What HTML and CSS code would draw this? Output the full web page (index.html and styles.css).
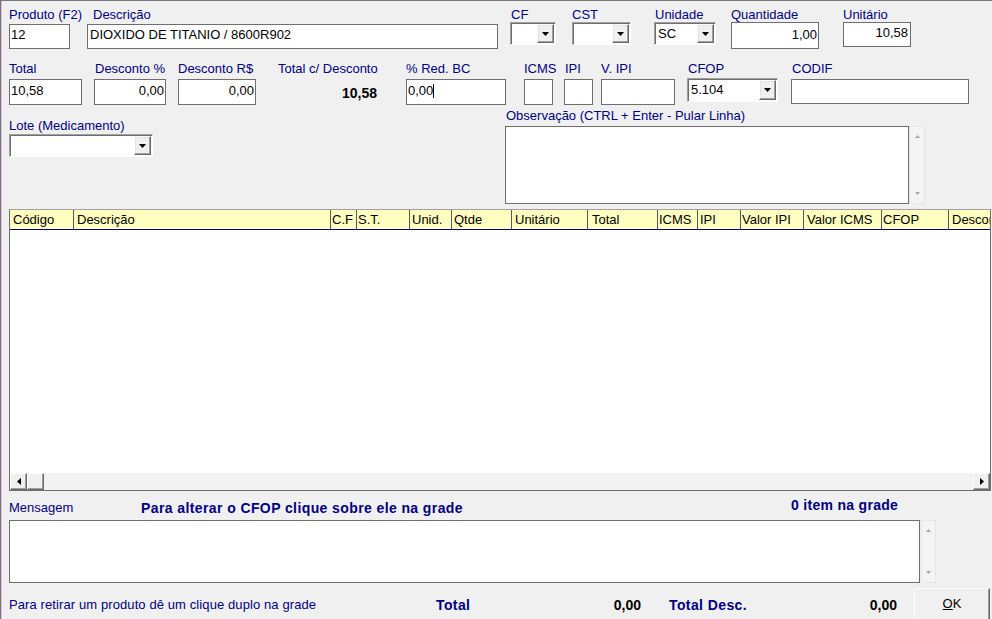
FILE: index.html
```html
<!DOCTYPE html>
<html lang="pt-BR">
<head>
<meta charset="utf-8">
<title>Itens da Nota</title>
<link rel="stylesheet" href="styles.css">
</head>
<body>
<div class="window">
  <div class="row row1">
    <div class="field f-prod">
      <div class="lbl">Produto (F2)</div>
      <div class="edit r1 mt2">12</div>
    </div>
    <div class="field f-desc">
      <div class="lbl">Descrição</div>
      <div class="edit r1 mt2 pl2">DIOXIDO DE TITANIO / 8600R902</div>
    </div>
    <div class="field f-cf">
      <div class="lbl pl1">CF</div>
      <div class="combo h23"><span class="combo-text"></span><span class="combo-btn"><svg width="7" height="4" viewBox="0 0 7 4"><path d="M0 0h7L3.5 4z" fill="#000"/></svg></span></div>
    </div>
    <div class="field f-cst">
      <div class="lbl">CST</div>
      <div class="combo h23"><span class="combo-text"></span><span class="combo-btn"><svg width="7" height="4" viewBox="0 0 7 4"><path d="M0 0h7L3.5 4z" fill="#000"/></svg></span></div>
    </div>
    <div class="field f-un">
      <div class="lbl pl1">Unidade</div>
      <div class="combo h23"><span class="combo-text">SC</span><span class="combo-btn"><svg width="7" height="4" viewBox="0 0 7 4"><path d="M0 0h7L3.5 4z" fill="#000"/></svg></span></div>
    </div>
    <div class="field f-qt">
      <div class="lbl">Quantidade</div>
      <div class="edit qt right">1,00</div>
    </div>
    <div class="field f-unit">
      <div class="lbl">Unitário</div>
      <div class="edit unit right">10,58</div>
    </div>
  </div>

  <div class="row row2">
    <div class="field f-tot">
      <div class="lbl">Total</div>
      <div class="edit r2">10,58</div>
    </div>
    <div class="field f-dp">
      <div class="lbl pl1">Desconto %</div>
      <div class="edit r2 right">0,00</div>
    </div>
    <div class="field f-dr">
      <div class="lbl">Desconto R$</div>
      <div class="edit r2 right">0,00</div>
    </div>
    <div class="field f-tcd">
      <div class="lbl">Total c/ Desconto</div>
      <div class="tcd-val">10,58</div>
    </div>
    <div class="field f-rbc">
      <div class="lbl">% Red. BC</div>
      <div class="edit r2">0,00<span class="caret"></span></div>
    </div>
    <div class="field f-icms">
      <div class="lbl">ICMS</div>
      <div class="edit r2"></div>
    </div>
    <div class="field f-ipi">
      <div class="lbl pl1">IPI</div>
      <div class="edit r2"></div>
    </div>
    <div class="field f-vipi">
      <div class="lbl">V. IPI</div>
      <div class="edit r2"></div>
    </div>
    <div class="field f-cfop">
      <div class="lbl pl1">CFOP</div>
      <div class="combo h24 mt2"><span class="combo-text">5.104</span><span class="combo-btn"><svg width="7" height="4" viewBox="0 0 7 4"><path d="M0 0h7L3.5 4z" fill="#000"/></svg></span></div>
    </div>
    <div class="field f-codif">
      <div class="lbl pl1">CODIF</div>
      <div class="edit codif"></div>
    </div>
  </div>

  <div class="row row3">
    <div class="field f-lote">
      <div class="lbl">Lote (Medicamento)</div>
      <div class="combo h23 mt1"><span class="combo-text"></span><span class="combo-btn"><svg width="7" height="4" viewBox="0 0 7 4"><path d="M0 0h7L3.5 4z" fill="#000"/></svg></span></div>
    </div>
    <div class="field f-obs">
      <div class="lbl pl1">Observação (CTRL + Enter - Pular Linha)</div>
      <div class="memo-wrap">
        <div class="memo obs-memo"></div>
        <div class="vscroll obs-scroll">
          <svg width="5" height="3" viewBox="0 0 5 3"><path d="M0 3h5L2.5 0z" fill="#a8a8a8"/></svg>
          <svg width="5" height="3" viewBox="0 0 5 3"><path d="M0 0h5L2.5 3z" fill="#a8a8a8"/></svg>
        </div>
      </div>
    </div>
  </div>

  <div class="grid">
    <div class="grid-head">
      <div class="cell c1">Código</div>
      <div class="cell c2">Descrição</div>
      <div class="cell c3">C.F</div>
      <div class="cell c4">S.T.</div>
      <div class="cell c5">Unid.</div>
      <div class="cell c6">Qtde</div>
      <div class="cell c7">Unitário</div>
      <div class="cell c8">Total</div>
      <div class="cell c9">ICMS</div>
      <div class="cell c10">IPI</div>
      <div class="cell c11">Valor IPI</div>
      <div class="cell c12">Valor ICMS</div>
      <div class="cell c13">CFOP</div>
      <div class="cell c14">Desconto</div>
    </div>
    <div class="grid-body"></div>
    <div class="hscroll">
      <div class="sb-btn"><svg width="4" height="7" viewBox="0 0 4 7"><path d="M4 0v7L0 3.5z" fill="#000"/></svg></div>
      <div class="sb-btn"></div>
      <div class="sb-track"></div>
      <div class="sb-btn"><svg width="4" height="7" viewBox="0 0 4 7"><path d="M0 0v7L4 3.5z" fill="#000"/></svg></div>
    </div>
  </div>

  <div class="row msg-row">
    <div class="msg-label">Mensagem</div>
    <div class="msg-bold">Para alterar o CFOP clique sobre ele na grade</div>
    <div class="msg-count">0 item na grade</div>
  </div>

  <div class="row msg-box-row">
    <div class="memo msg-memo"></div>
    <div class="vscroll msg-scroll">
      <svg width="5" height="3" viewBox="0 0 5 3"><path d="M0 3h5L2.5 0z" fill="#a8a8a8"/></svg>
      <svg width="5" height="3" viewBox="0 0 5 3"><path d="M0 0h5L2.5 3z" fill="#a8a8a8"/></svg>
    </div>
  </div>

  <div class="row bot-row">
    <div class="hint">Para retirar um produto dê um clique duplo na grade</div>
    <div class="bold navy tot-lbl">Total</div>
    <div class="bold tot-val">0,00</div>
    <div class="bold navy tdesc-lbl">Total Desc.</div>
    <div class="bold tdesc-val">0,00</div>
    <div class="ok-btn"><span class="ul">O</span>K</div>
  </div>
</div>
</body>
</html>
```
FILE: styles.css
```css
* { box-sizing: border-box; }
html, body {
  margin: 0;
  padding: 0;
  width: 992px;
  height: 619px;
  overflow: hidden;
  background: #f0f0f0;
}
body {
  font-family: "Liberation Sans", Arial, sans-serif;
  font-size: 13px;
  color: #000;
}
.window {
  width: 992px;
  height: 619px;
  border-top: 1px solid #7a7a7a;
  border-left: 1px solid #7a6f7a;
  box-shadow: inset 1px 0 0 #d9c8d9;
  padding: 6px 0 0 8px;
  background: #f0f0f0;
  overflow: hidden;
}
.row { display: flex; align-items: flex-start; }
.field { display: flex; flex-direction: column; flex: none; }
.lbl {
  color: #000080;
  line-height: 15px;
  height: 15px;
  white-space: nowrap;
}
.pl1 { padding-left: 1px; }
.pl2 { padding-left: 2px; }
.mt1 { margin-top: 1px; }
.mt2 { margin-top: 2px; }

/* edit boxes */
.edit {
  background: #fff;
  border: 1px solid #6e6e6e;
  line-height: 15px;
  padding: 2px 2px 0 1px;
  white-space: nowrap;
  overflow: hidden;
}
.edit.right { text-align: right; padding-right: 1px; }
.edit.pl2 { padding-left: 2px; }
.r1 { height: 25px; }
.r2 { height: 26px; margin-top: 3px; padding-top: 3px; }
.qt { height: 27px; padding-top: 4px; }
.unit { height: 25px; padding-top: 2px; padding-right: 2px !important; }
.codif { height: 25px; margin-top: 3px; }
.caret {
  display: inline-block;
  width: 1px;
  height: 14px;
  background: #000;
  vertical-align: -3px;
}

/* combo boxes */
.combo {
  display: flex;
  background: #fff;
  border: 1px solid;
  border-color: #a0a0a0 #fff #fff #a0a0a0;
  box-shadow: inset 1px 1px 0 #6e6e6e;
}
.h23 { height: 23px; }
.h24 { height: 24px; }
.combo-text {
  flex: 1;
  padding: 3px 0 0 3px;
  line-height: 15px;
}
.combo-btn {
  flex: none;
  width: 17px;
  margin: 1px 1px 1px 0;
  background: #f0f0f0;
  border: 1px solid;
  border-color: #fff #696969 #696969 #fff;
  box-shadow: inset -1px -1px 0 #a0a0a0, inset 1px 1px 0 #e3e3e3;
  display: flex;
  align-items: center;
  justify-content: center;
}
.combo-btn svg { display: block; }

/* row 1 */
.f-prod { width: 61px; }
.f-desc { width: 411px; margin-left: 17px; }
.f-desc .lbl { padding-left: 6px; }
.f-cf { width: 46px; margin-left: 12px; }
.f-cst { width: 59px; margin-left: 16px; }
.f-un { width: 62px; margin-left: 23px; }
.f-qt { width: 88px; margin-left: 15px; }
.f-unit { width: 68px; margin-left: 24px; }

/* row 2 */
.row2 { margin-top: 12px; }
.f-tot { width: 73px; }
.f-dp { width: 72px; margin-left: 12px; }
.f-dr { width: 78px; margin-left: 12px; }
.f-tcd { width: 100px; margin-left: 22px; }
.tcd-val {
  margin-top: 9px;
  font-weight: bold;
  font-size: 14px;
  line-height: 16px;
  text-align: right;
  padding-right: 1px;
}
.f-rbc { width: 100px; margin-left: 28px; }
.f-icms { width: 29px; margin-left: 18px; }
.f-ipi { width: 29px; margin-left: 11px; }
.f-vipi { width: 74px; margin-left: 8px; }
.f-cfop { width: 91px; margin-left: 12px; }
.f-codif { width: 178px; margin-left: 13px; }

/* row 3 */
.row3 { margin-top: 3px; }
.f-lote { width: 144px; margin-top: 10px; }
.f-obs { margin-left: 352px; }
.memo-wrap { display: flex; margin-top: 3px; }
.memo {
  background: #fff;
  border: 1px solid #6e6e6e;
}
.obs-memo { width: 404px; height: 78px; }
.vscroll {
  background: #f4f4f4;
  border: 1px solid #e6e6e6;
  display: flex;
  flex-direction: column;
  justify-content: space-between;
  align-items: center;
  padding: 8px 0 8px;
}
.vscroll svg { display: block; }
.obs-scroll { width: 16px; height: 78px; }

/* grid */
.grid {
  width: 982px;
  height: 282px;
  margin-top: 5px;
  border: 1px solid #6e6e6e;
  border-top-color: #a0a0a0;
  background: #fff;
  display: flex;
  flex-direction: column;
  overflow: hidden;
}
.grid-head {
  display: flex;
  flex: none;
  height: 20px;
  background: #ffffc0;
  border-bottom: 1px solid #000080;
  overflow: hidden;
}
.cell {
  flex: none;
  height: 19px;
  border-right: 1px solid #5a5a5a;
  padding: 1px 0 0 2px;
  line-height: 17px;
  white-space: nowrap;
  overflow: hidden;
}
.c1 { width: 64px; padding-left: 3px; }
.c2 { width: 257px; padding-left: 3px; }
.c3 { width: 26px; padding-left: 1px; }
.c4 { width: 53px; padding-left: 1px; }
.c5 { width: 42px; }
.c6 { width: 60px; }
.c7 { width: 76px; padding-left: 3px; }
.c8 { width: 70px; padding-left: 4px; }
.c9 { width: 40px; padding-left: 1px; }
.c10 { width: 43px; }
.c11 { width: 63px; padding-left: 1px; }
.c12 { width: 78px; padding-left: 3px; }
.c13 { width: 67px; padding-left: 1px; }
.c14 { width: 80px; padding-left: 3px; border-right: none; }
.grid-body { flex: 1; background: #fff; }
.hscroll {
  flex: none;
  height: 17px;
  display: flex;
}
.sb-btn {
  flex: none;
  width: 17px;
  height: 17px;
  background: #f0f0f0;
  border: 1px solid;
  border-color: #fff #696969 #696969 #fff;
  box-shadow: inset -1px -1px 0 #a0a0a0;
  display: flex;
  align-items: center;
  justify-content: center;
}
.sb-btn svg { display: block; }
.sb-track {
  flex: 1;
  background: repeating-conic-gradient(#ececec 0 25%, #fafafa 0 50%) 0 0 / 2px 2px;
}

/* message area */
.msg-row { margin-top: 6px; height: 18px; }
.msg-label { width: 132px; margin-top: 3px; color: #000080; line-height: 15px; }
.msg-bold {
  width: 650px;
  margin-top: 3px;
  color: #000080;
  font-weight: bold;
  font-size: 14px;
  line-height: 16px;
  letter-spacing: 0.4px;
  white-space: nowrap;
}
.msg-count {
  color: #000080;
  font-weight: bold;
  font-size: 14px;
  line-height: 16px;
  letter-spacing: 0.3px;
  white-space: nowrap;
}
.msg-box-row { margin-top: 5px; }
.msg-memo { width: 911px; height: 63px; }
.msg-scroll { width: 15px; height: 63px; margin-left: 1px; }

/* bottom row */
.bot-row { margin-top: 5px; }
.hint {
  width: 427px;
  margin-top: 9px;
  color: #000080;
  line-height: 15px;
  letter-spacing: 0.1px;
  white-space: nowrap;
}
.bold {
  margin-top: 9px;
  font-weight: bold;
  font-size: 14px;
  line-height: 16px;
  white-space: nowrap;
}
.navy { color: #000080; letter-spacing: 0.4px; }
.tot-lbl { width: 140px; }
.tot-val { width: 65px; text-align: right; }
.tdesc-lbl { width: 160px; margin-left: 28px; }
.tdesc-val { width: 68px; text-align: right; }
.ok-btn {
  flex: none;
  width: 76px;
  height: 33px;
  margin-left: 17px;
  background: #f0f0f0;
  border: 1px solid;
  border-color: #fff #696969 #696969 #fff;
  box-shadow: inset -1px -1px 0 #a0a0a0, 0 0 0 0 #000;
  outline: 1px solid #b4b4b4;
  outline-offset: -1px;
  text-align: center;
  line-height: 15px;
  padding-top: 7px;
}
.ok-btn { outline: none; }
.ul { text-decoration: underline; }
```
